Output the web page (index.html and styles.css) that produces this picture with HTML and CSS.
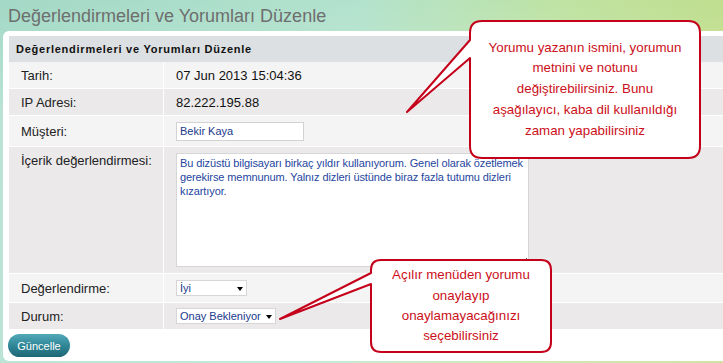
FILE: index.html
```html
<!DOCTYPE html>
<html lang="tr">
<head>
    <meta charset="UTF-8">
    <meta name="viewport" content="width=device-width, initial-scale=1.0">
    <title>Değerlendirmeleri ve Yorumları Düzenle</title>
    <link rel="stylesheet" href="styles.css">
</head>
<body>
    <div class="page">
        <h1 class="page-title">Değerlendirmeleri ve Yorumları Düzenle</h1>

        <form class="panel">
            <div class="box">
                <div class="box-head">Değerlendirmeleri ve Yorumları Düzenle</div>

                <div class="row row-light">
                    <div class="label">Tarih:</div>
                    <div class="value">07 Jun 2013 15:04:36</div>
                </div>
                <div class="row row-dark">
                    <div class="label">IP Adresi:</div>
                    <div class="value">82.222.195.88</div>
                </div>
                <div class="row row-light row-customer">
                    <div class="label">Müşteri:</div>
                    <div class="value"><input type="text" class="field" value="Bekir Kaya"></div>
                </div>
                <div class="row row-dark row-content">
                    <div class="label">İçerik değerlendirmesi:</div>
                    <div class="value"><textarea class="review">Bu dizüstü bilgisayarı birkaç yıldır kullanıyorum. Genel olarak özetlemek gerekirse memnunum. Yalnız dizleri üstünde biraz fazla tutumu dizleri kızartıyor.</textarea></div>
                </div>
                <div class="row row-light row-rating">
                    <div class="label">Değerlendirme:</div>
                    <div class="value">
                        <span class="select-wrap select-rating">
                            <select class="select">
                                <option>İyi</option>
                            </select>
                        </span>
                    </div>
                </div>
                <div class="row row-dark">
                    <div class="label">Durum:</div>
                    <div class="value">
                        <span class="select-wrap select-status">
                            <select class="select">
                                <option>Onay Bekleniyor</option>
                            </select>
                        </span>
                    </div>
                </div>
            </div>

            <button type="submit" class="btn">Güncelle</button>
        </form>

        <!-- help callouts -->
        <div class="callout callout-top">
            <svg class="callout-shape" width="297" height="141" viewBox="0 0 297 141">
                <path d="M77,2 H283 Q295,2 295,14 V127 Q295,139 283,139 H77 Q65,139 65,127 V39 L2,93 L65,21 V14 Q65,2 77,2 Z" />
            </svg>
            <div class="callout-text callout-text-top">
                Yorumu yazanın ismini, yorumun<br>metnini ve notunu<br>değiştirebilirsiniz. Bunu<br>aşağılayıcı, kaba dil kullanıldığı<br>zaman yapabilirsiniz
            </div>
        </div>

        <div class="callout callout-bottom">
            <svg class="callout-shape" width="275" height="96" viewBox="0 0 275 96">
                <path d="M103,2 H263 Q273,2 273,12 V84 Q273,94 263,94 H103 Q93,94 93,84 V26 L2,61 L93,15 V12 Q93,2 103,2 Z" />
            </svg>
            <div class="callout-text callout-text-bottom">
                Açılır menüden yorumu<br>onaylayıp<br>onaylamayacağınızı<br>seçebilirsiniz
            </div>
        </div>
    </div>
</body>
</html>
```

FILE: styles.css
```css
html, body {
    margin: 0;
    padding: 0;
}
body {
    font-family: 'Liberation Sans', Arial, sans-serif;
    color: #222;
    overflow: hidden;
    background:
        linear-gradient(to bottom, rgba(255, 255, 255, 0) 0, rgba(255, 255, 255, 0.25) 120px),
        linear-gradient(100deg, #a3d9c6 0%, #b2e2ce 45%, #bfe3a2 72%, #c0dc85 100%);
    min-height: 363px;
}
.page {
    position: relative;
}
.page-title {
    margin: 0 0 5px;
    padding: 6px 8px 0;
    font-size: 18px;
    font-weight: normal;
    line-height: 20px;
    color: #6e6e6e;
}
.panel {
    margin: 0 0 0 3px;
    padding: 5px 0 4px 6px;
    background: #fff;
    border-radius: 6px 0 0 6px;
}
.box-head {
    height: 26px;
    padding-left: 7px;
    display: flex;
    align-items: center;
    background: #dce0e2;
    font-size: 11px;
    font-weight: bold;
    letter-spacing: 0.75px;
    color: #111;
}
.row {
    display: flex;
    height: 27px;
    box-sizing: border-box;
    border-bottom: 1px solid #fff;
    font-size: 13px;
}
.row-light {
    background: #f4f4f4;
}
.row-dark {
    background: #ebe9ea;
}
.row-customer {
    height: 31px;
}
.row-content {
    height: 127px;
}
.row-rating {
    height: 29px;
}
.label {
    width: 155px;
    flex-shrink: 0;
    box-sizing: border-box;
    padding-left: 12px;
    border-right: 1px solid #fff;
    display: flex;
    align-items: center;
    color: #222;
}
.value {
    flex: 1;
    padding-left: 12px;
    display: flex;
    align-items: center;
    color: #111;
}
.row-content .label,
.row-content .value {
    align-items: flex-start;
    padding-top: 6px;
}
.field {
    width: 128px;
    height: 19px;
    box-sizing: border-box;
    margin: 0;
    padding: 0 3px;
    border: 1px solid #d2d2d2;
    background: #fff;
    font-family: 'Liberation Sans', Arial, sans-serif;
    font-size: 11px;
    color: #203a8c;
}
.review {
    width: 353px;
    height: 114px;
    box-sizing: border-box;
    margin: 0;
    padding: 2px 1px 2px 3px;
    border: 1px solid #d6d6d6;
    background: #fff;
    font-family: 'Liberation Sans', Arial, sans-serif;
    font-size: 11px;
    letter-spacing: -0.1px;
    line-height: 14px;
    color: #2446a0;
}
.select-wrap {
    position: relative;
    display: inline-block;
}
.select-wrap::after {
    content: "";
    position: absolute;
    right: 4px;
    top: 7px;
    border-left: 3.5px solid transparent;
    border-right: 3.5px solid transparent;
    border-top: 4px solid #000;
    pointer-events: none;
}
.select {
    -webkit-appearance: none;
    appearance: none;
    height: 16px;
    box-sizing: border-box;
    margin: 0;
    padding: 0 3px;
    border: 1px solid #d6d6d6;
    border-radius: 0;
    background: #fff;
    font-family: 'Liberation Sans', Arial, sans-serif;
    font-size: 11px;
    line-height: 14px;
    color: #203a8c;
}
.select-rating .select {
    width: 71px;
}
.select-status .select {
    width: 100px;
}
.btn {
    display: block;
    width: 62px;
    height: 23px;
    margin: 4px 0 0 -1px;
    padding: 0;
    border: none;
    border-radius: 12px;
    background: linear-gradient(to bottom, #52a9b8 0%, #2f8797 50%, #1d6775 100%);
    font-family: 'Liberation Sans', Arial, sans-serif;
    font-size: 11px;
    color: #fff;
    cursor: pointer;
}
.callout {
    position: absolute;
}
.callout-top {
    left: 405px;
    top: 19px;
    width: 297px;
    height: 141px;
}
.callout-bottom {
    left: 278px;
    top: 258px;
    width: 275px;
    height: 96px;
}
.callout-shape {
    position: absolute;
    left: 0;
    top: 0;
    overflow: visible;
}
.callout-shape path {
    fill: #fff;
    stroke: #c4001a;
    stroke-width: 2;
    stroke-linejoin: round;
}
.callout-text {
    position: absolute;
    display: flex;
    align-items: center;
    justify-content: center;
    text-align: center;
    font-size: 13.33px;
    color: #cc1020;
}
.callout-text-top {
    left: 65px;
    top: 2px;
    width: 230px;
    height: 137px;
    line-height: 20.75px;
}
.callout-text-bottom {
    left: 93px;
    top: 2px;
    width: 180px;
    height: 92px;
    line-height: 20.3px;
}
```
